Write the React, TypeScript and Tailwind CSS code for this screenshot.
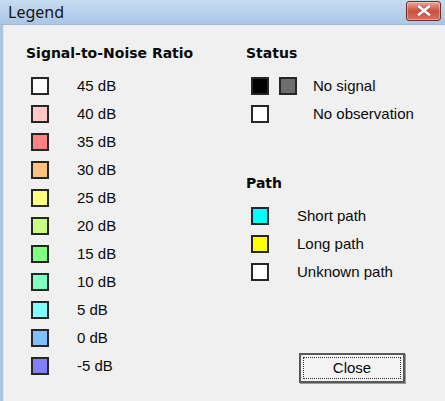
import React from "react";

const snr: [string, string][] = [
  ["#ffffff", "45 dB"],
  ["#ffc8c8", "40 dB"],
  ["#ff8080", "35 dB"],
  ["#ffc080", "30 dB"],
  ["#ffff80", "25 dB"],
  ["#c8ff80", "20 dB"],
  ["#80ff80", "15 dB"],
  ["#80ffc0", "10 dB"],
  ["#80ffff", "5 dB"],
  ["#80c0ff", "0 dB"],
  ["#8080ff", "-5 dB"],
];

const paths: [string, string][] = [
  ["#00ffff", "Short path"],
  ["#ffff00", "Long path"],
  ["#ffffff", "Unknown path"],
];

function Swatch({ color }: { color: string }) {
  return (
    <div
      className="w-[18px] h-[18px] border-2 border-[#262626] shrink-0"
      style={{ backgroundColor: color }}
    />
  );
}

export default function App() {
  return (
    <div
      className="w-[445px] h-[401px] flex flex-col overflow-hidden bg-[#f0f0f0]"
      style={{ fontFamily: '"Liberation Sans", Arial, sans-serif' }}
    >
      {/* Title bar */}
      <div className="h-[25px] shrink-0 flex items-center justify-between bg-gradient-to-b from-[#c6dbf1] to-[#abc6e4] pl-[8px] pr-[4px] border-b border-[#9fb9d8]">
        <span
          className="text-[16px] text-[#151515] leading-none mt-[-1px]"
          style={{ fontFamily: '"Noto Sans", "Open Sans", sans-serif' }}
        >
          Legend
        </span>
        <div className="w-[35px] h-[20px] mt-[-3px] rounded-[3px] border border-[#6e2c25] bg-gradient-to-b from-[#e9a697] via-[#c9503f] to-[#d9725f] flex items-center justify-center shadow-[inset_0_0_0_1px_rgba(255,255,255,0.35)]">
          <svg width="14" height="11" viewBox="0 0 14 11">
            <path
              d="M2 1.5 L12 9.5 M12 1.5 L2 9.5"
              stroke="#4a1a15"
              strokeWidth="4"
              strokeLinecap="square"
              opacity="0.35"
            />
            <path
              d="M2 1.5 L12 9.5 M12 1.5 L2 9.5"
              stroke="#ffffff"
              strokeWidth="2.6"
              strokeLinecap="square"
            />
          </svg>
        </div>
      </div>
      {/* Body */}
      <div className="flex-1 flex">
        <div className="w-[3px] bg-[#aac5e4] shrink-0" />
        <div className="w-[1px] bg-[#dce7f4] shrink-0" />
        <div className="flex-1 flex pl-[22px] pt-[20px] text-[15px] text-[#0a0a0a]">
          {/* Left column */}
          <div className="w-[220px] shrink-0 flex flex-col">
            <div
              className="h-[16px] leading-[16px] font-bold text-[14px]"
              style={{ fontFamily: '"DejaVu Sans", Tahoma, sans-serif' }}
            >
              Signal-to-Noise Ratio
            </div>
            <div className="mt-[11px] flex flex-col">
              {snr.map(([c, t]) => (
                <div key={t} className="h-[28px] flex items-center">
                  <div className="ml-[5px]">
                    <Swatch color={c} />
                  </div>
                  <span className="ml-[28px]">{t}</span>
                </div>
              ))}
            </div>
          </div>
          {/* Right column */}
          <div className="flex-1 flex flex-col">
            <div
              className="h-[16px] leading-[16px] font-bold text-[14px]"
              style={{ fontFamily: '"DejaVu Sans", Tahoma, sans-serif' }}
            >
              Status
            </div>
            <div className="mt-[11px] flex flex-col">
              <div className="h-[28px] flex items-center">
                <div className="ml-[5px] flex gap-[10px]">
                  <Swatch color="#000000" />
                  <Swatch color="#6e6e6e" />
                </div>
                <span className="ml-[16px]">No signal</span>
              </div>
              <div className="h-[28px] flex items-center">
                <div className="ml-[5px] w-[46px]">
                  <Swatch color="#ffffff" />
                </div>
                <span className="ml-[16px]">No observation</span>
              </div>
            </div>
            <div
              className="mt-[47px] h-[16px] leading-[16px] font-bold text-[14px]"
              style={{ fontFamily: '"DejaVu Sans", Tahoma, sans-serif' }}
            >
              Path
            </div>
            <div className="mt-[11px] flex flex-col">
              {paths.map(([c, t]) => (
                <div key={t} className="h-[28px] flex items-center">
                  <div className="ml-[5px]">
                    <Swatch color={c} />
                  </div>
                  <span className="ml-[28px]">{t}</span>
                </div>
              ))}
            </div>
            <div className="mt-[67px] ml-[53px]">
              <button className="w-[106px] h-[30px] border-2 border-[#5a5a5a] bg-[#f3f3f3] p-[2px] shadow-[1px_1px_0_#9a9a9a]">
                <div className="w-full h-full border border-dotted border-[#333] flex items-center justify-center text-[15px] text-[#0a0a0a]">
                  Close
                </div>
              </button>
            </div>
          </div>
        </div>
      </div>
    </div>
  );
}
